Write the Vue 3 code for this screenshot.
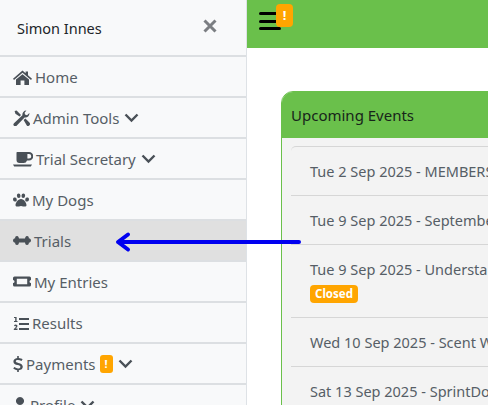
<script setup>
const menu = [
  { label: 'Home', icon: 'home', w: 19, chev: false },
  { label: 'Admin Tools', icon: 'tools', w: 17, chev: true },
  { label: 'Trial Secretary', icon: 'coffee', w: 20, chev: true },
  { label: 'My Dogs', icon: 'paw', w: 16, chev: false },
  { label: 'Trials', icon: 'bone', w: 18, chev: false, active: true },
  { label: 'My Entries', icon: 'ticket', w: 18, chev: false },
  { label: 'Results', icon: 'list', w: 16, chev: false },
  { label: 'Payments', icon: 'dollar', w: 10, chev: true, badge: true },
  { label: 'Profile', icon: 'user', w: 14, chev: true },
]
const paths = {
  home: 'M9.5 1.5 L12.6 4.2 V2.4 H15 V6.3 L19 9.8 L18 11 L9.5 3.8 L1 11 L0 9.8 Z M3 10.6 L9.5 5.2 L16 10.6 V16 H11.4 V11.4 H7.6 V16 H3 Z',
  tools: 'M1.6 1 L3.6 0.5 L8 5 L6.6 6.6 L2.4 3.8 Z M13.4 0.6 A4 4 0 0 0 9.4 5.2 L1 13.2 A1.7 1.7 0 0 0 3.6 15.8 L11.6 7.4 A4 4 0 0 0 16.4 3 L14 5.2 L12 4.6 L11.6 2.8 Z M10.6 10 L12.4 8.4 L16.4 12.6 A1.8 1.8 0 0 1 13.8 15.4 Z',
  coffee: 'M4 1 H16 A4 4 0 0 1 16 9.5 H14 A3.5 3.5 0 0 1 10.5 12 H6.5 A3 3 0 0 1 3.5 9 V1.5 Z M14.4 3 V7.5 H16 A2.25 2.25 0 0 0 16 3 Z M0 13.5 H19 L17.8 15.5 H1.2 Z',
  paw: 'M8 7 C11 7 13.5 11 13.5 13 C13.5 15 11.5 14.8 8 14 C4.5 14.8 2.5 15 2.5 13 C2.5 11 5 7 8 7 Z M1.8 5.6 A1.6 2 -15 1 1 2 9.5 A1.6 2 -15 1 1 1.8 5.6 Z M14.2 5.6 A1.6 2 15 1 1 14 9.5 A1.6 2 15 1 1 14.2 5.6 Z M5.6 1.4 A1.8 2.3 -8 1 1 5.8 6 A1.8 2.3 -8 1 1 5.6 1.4 Z M10.4 1.4 A1.8 2.3 8 1 1 10.2 6 A1.8 2.3 8 1 1 10.4 1.4 Z',
  bone: 'M4 3 C5.5 3 5.8 4.5 6 5.5 H12 C12.2 4.5 12.5 3 14 3 C15.6 3 16 4.4 15.8 5.3 C17.2 5.6 18 6.4 18 7.5 C18 8.6 17.2 9.4 15.8 9.7 C16 10.6 15.6 12 14 12 C12.5 12 12.2 10.5 12 9.5 H6 C5.8 10.5 5.5 12 4 12 C2.4 12 2 10.6 2.2 9.7 C0.8 9.4 0 8.6 0 7.5 C0 6.4 0.8 5.6 2.2 5.3 C2 4.4 2.4 3 4 3 Z',
  ticket: 'M1.5 2.5 H16.5 A1.5 1.5 0 0 1 18 4 V6 A1.5 1.5 0 0 0 18 9 V11 A1.5 1.5 0 0 1 16.5 12.5 H1.5 A1.5 1.5 0 0 1 0 11 V9 A1.5 1.5 0 0 0 0 6 V4 A1.5 1.5 0 0 1 1.5 2.5 Z M3.8 4.7 V10.3 H14.2 V4.7 Z',
  list: 'M6 3 H16 V5 H6 Z M6 8 H16 V10 H6 Z M6 13 H16 V15 H6 Z M1 2 H3.6 V6 H4.5 V7 H1 V6 H2.2 V3 H1 Z M1 10.5 Q1.4 9.5 2.8 9.5 Q4.5 9.5 4.5 11 Q4.5 12 2.6 13.5 H4.5 V15 H0.8 V14 Q3 12.2 3 11.2 Q2.6 10.6 1.7 11.2 Z',
  dollar: 'M4.2 0 H5.8 V2 C7.4 2.1 8.8 2.6 9.6 3.3 L8.5 4.9 C7.4 4.2 6.2 3.9 5 3.9 C3.6 3.9 2.8 4.4 2.8 5.2 C2.8 6 3.6 6.4 5.4 6.9 C8 7.6 9.8 8.5 9.8 10.8 C9.8 12.8 8.2 14 5.8 14.2 V16 H4.2 V14.2 C2.6 14.1 1.2 13.5 0.2 12.6 L1.4 11 C2.6 11.9 3.8 12.4 5 12.4 C6.6 12.4 7.4 11.8 7.4 10.9 C7.4 10 6.5 9.6 4.6 9.1 C2.2 8.4 0.4 7.6 0.4 5.4 C0.4 3.6 1.9 2.3 4.2 2 Z',
  user: 'M7 0 A4 4 0 1 1 6.99 0 Z M3 9 H11 A3 3 0 0 1 14 12 V16 H0 V12 A3 3 0 0 1 3 9 Z',
}
</script>

<template>
  <div class="app">
    <aside class="side">
      <div class="side-head">
        <span class="user-name">Simon Innes</span>
        <svg class="close" viewBox="0 0 14 14" width="14" height="14" aria-label="Close">
          <path d="M1.5 1.5 L12.5 12.5 M12.5 1.5 L1.5 12.5" />
        </svg>
      </div>
      <nav>
        <a v-for="m in menu" :key="m.label" class="item" :class="{ active: m.active }">
          <svg class="ic" :width="m.w" height="16" :viewBox="`0 0 ${m.w} 16`"><path :d="paths[m.icon]" fill-rule="evenodd" /></svg>
          <span>{{ m.label }}</span>
          <span v-if="m.badge" class="badge-mini">!</span>
          <svg v-if="m.chev" class="chev" width="15" height="10" viewBox="0 0 15 10"><path d="M1.5 1.5 L7.5 7.5 L13.5 1.5" /></svg>
        </a>
      </nav>
    </aside>
    <main class="main">
      <header class="topbar">
        <div class="burger"><i></i><i></i><i></i><b class="alert">!</b></div>
      </header>
      <section class="content">
        <div class="card">
          <div class="card-head">Upcoming Events</div>
          <div class="card-body">
            <ul class="events">
              <li>Tue 2 Sep 2025 - MEMBERS ONLY</li>
              <li>Tue 9 Sep 2025 - September Trial</li>
              <li class="tall">Tue 9 Sep 2025 - Understanding Trials<span class="closed">Closed</span></li>
              <li>Wed 10 Sep 2025 - Scent Work</li>
              <li>Sat 13 Sep 2025 - SprintDog</li>
            </ul>
          </div>
        </div>
      </section>
    </main>
    <svg class="pointer" width="188" height="24" viewBox="0 0 188 24">
      <path d="M186 12 H6 M15 4.5 L5 12 L15 19.5" />
    </svg>
  </div>
</template>

<style>
html, body { margin: 0; height: 100%; overflow: hidden; background: #fff; }
</style>

<style scoped>
.app { position: relative; display: flex; width: 488px; height: 405px; overflow: hidden; font-family: "Noto Sans", "Open Sans", sans-serif; font-size: 15px; color: #495057; }
.side { width: 246px; flex: none; background: #f8f9fa; border-right: 1px solid #dee2e6; }
.side-head { height: 55px; display: flex; align-items: center; justify-content: space-between; padding: 0 29px 0 17px; border-bottom: 2px solid #dcdfe2; box-sizing: content-box; color: #212529; }
.user-name { font-size: 14.5px; }
.close { margin-top: -3px; }
.close path { stroke: #7b7e82; stroke-width: 3; fill: none; }
.item { display: flex; align-items: center; height: 39px; padding-left: 13px; gap: 3px; border-bottom: 2px solid #dcdfe2; color: #565e66; }
.item.active { background: #e0e0e0; }
.ic { flex: none; fill: #495057; }
.chev { margin-left: 2px; fill: none; stroke: #495057; stroke-width: 2.4; }
.badge-mini { width: 13px; height: 18px; margin-left: 1px; background: #ffa500; color: #fff; border-radius: 3px; font-size: 11px; font-weight: 700; text-align: center; line-height: 18px; }
.main { flex: 1; min-width: 0; }
.topbar { height: 48px; background: #6ac04b; padding: 12px 0 0 12px; box-sizing: border-box; }
.burger { position: relative; width: 22px; height: 18px; display: flex; flex-direction: column; justify-content: space-between; }
.burger i { display: block; height: 3px; border-radius: 2px; background: #000; }
.alert { position: absolute; left: 17px; top: -8px; width: 17px; height: 23px; border-radius: 4px; background: #ffa500; color: #fff; font-size: 13px; text-align: center; line-height: 22px; }
.content { padding: 43px 0 0 34px; }
.card { width: 300px; border: 1px solid #6ac04b; border-radius: 12px 0 0 0; overflow: hidden; }
.card-head { height: 46px; background: #6ac04b; padding-left: 9px; line-height: 46px; font-size: 15px; color: #17251a; white-space: nowrap; }
.card-body { background: #f3f3f3; padding: 8px 0 0 9px; }
.events { list-style: none; margin: 0; padding: 0; border-top: 1px solid #d6d6d6; border-radius: 5px 0 0 0; }
.events li { height: 48px; padding-left: 19px; border-bottom: 1px solid #d6d6d6; line-height: 48px; white-space: nowrap; overflow: hidden; color: #565e66; font-size: 14.5px; }
.events li.tall { height: 72px; position: relative; }
.closed { position: absolute; left: 19px; top: 40px; width: 48px; height: 18px; border-radius: 4px; background: #ffa500; color: #fff; font-size: 11.5px; font-weight: 700; line-height: 18px; text-align: center; }
.pointer { position: absolute; left: 113px; top: 230px; }
.pointer path { fill: none; stroke: #0000f0; stroke-width: 4; stroke-linecap: round; stroke-linejoin: round; }
</style>
